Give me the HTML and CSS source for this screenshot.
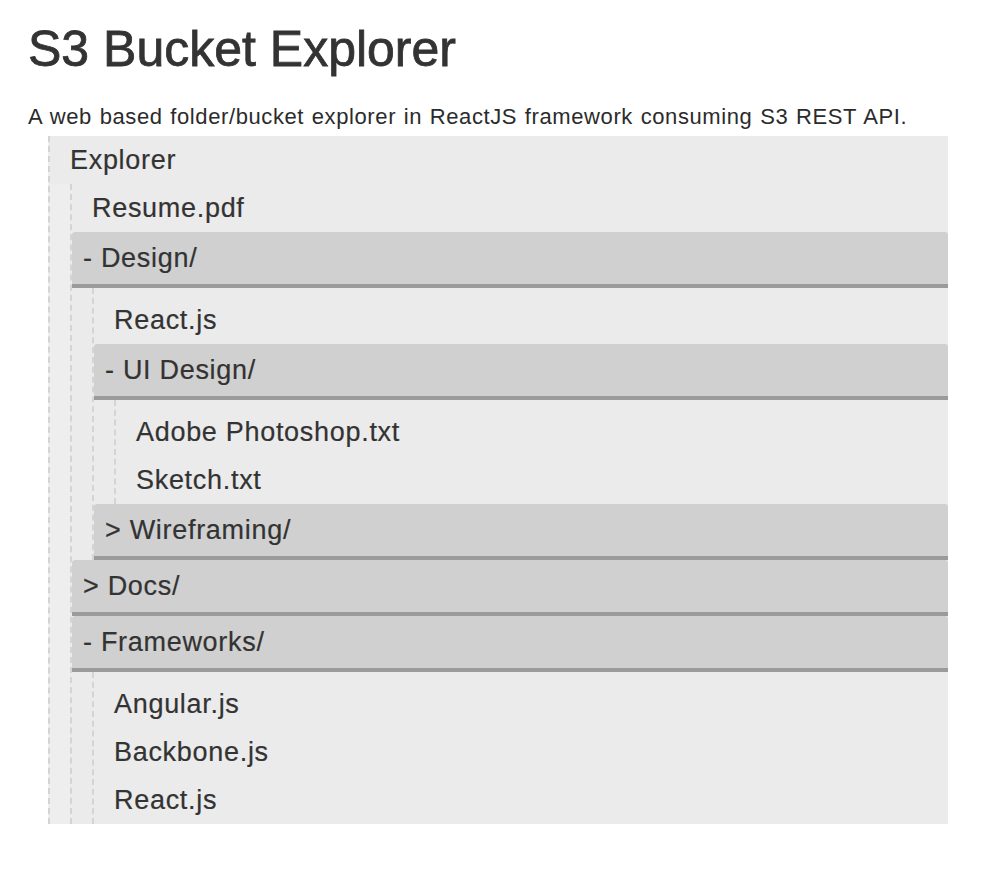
FILE: index.html
```html
<!DOCTYPE html>
<html lang="en">
<head>
<meta charset="utf-8">
<title>S3 Bucket Explorer</title>
<link rel="stylesheet" href="styles.css">
</head>
<body>
<div class="page">
  <h1 class="title">S3 Bucket Explorer</h1>
  <p class="lead">A web based folder/bucket explorer in ReactJS framework consuming S3 REST API.</p>
  <div class="explorer">
    <div class="root">Explorer</div>
    <ul class="tree level1">
      <li class="file">Resume.pdf</li>
      <li class="folder">
        <div class="folder-head">- Design/</div>
        <ul class="tree">
          <li class="file">React.js</li>
          <li class="folder">
            <div class="folder-head">- UI Design/</div>
            <ul class="tree">
              <li class="file">Adobe Photoshop.txt</li>
              <li class="file">Sketch.txt</li>
            </ul>
          </li>
          <li class="folder">
            <div class="folder-head">&gt; Wireframing/</div>
          </li>
        </ul>
      </li>
      <li class="folder">
        <div class="folder-head">&gt; Docs/</div>
      </li>
      <li class="folder">
        <div class="folder-head">- Frameworks/</div>
        <ul class="tree">
          <li class="file">Angular.js</li>
          <li class="file">Backbone.js</li>
          <li class="file">React.js</li>
        </ul>
      </li>
    </ul>
  </div>
</div>
</body>
</html>
```
FILE: styles.css
```css
html, body {
  margin: 0;
  padding: 0;
  background: #ffffff;
}

body {
  font-family: "Liberation Sans", Arial, sans-serif;
  color: #333333;
}

.page {
  padding: 22px 28px 40px;
}

.title {
  margin: 0;
  font-size: 50px;
  line-height: 55px;
  font-weight: normal;
  color: #333333;
  -webkit-text-stroke: 0.8px #333333;
}

.lead {
  margin: 28px 0 0;
  font-size: 22px;
  line-height: 24px;
  letter-spacing: 0.6px;
  word-spacing: 1px;
  color: #2b2b2b;
  white-space: nowrap;
}

.explorer {
  margin: 7px 0 0 20px;
  width: 898px;
  background: #eeeeee;
  border-left: 2px dashed #d4d4d4;
}

.root {
  height: 48px;
  line-height: 48px;
  padding-left: 20px;
  background: #ebebeb;
  font-size: 27px;
  letter-spacing: 0.7px;
  -webkit-text-stroke: 0.2px #333333;
}

.tree {
  list-style: none;
  margin: 0 0 0 20px;
  padding: 0;
  background: #ebebeb;
  border-left: 2px dashed #d4d4d4;
}

.tree .tree {
  padding-top: 8px;
}

.file {
  height: 48px;
  line-height: 48px;
  padding-left: 20px;
  font-size: 27px;
  letter-spacing: 0.7px;
  -webkit-text-stroke: 0.2px #333333;
}

.folder-head {
  height: 52px;
  line-height: 52px;
  padding-left: 11px;
  background: #d0d0d0;
  border-bottom: 4px solid #9b9b9b;
  border-radius: 3px 3px 0 0;
  font-size: 27px;
  letter-spacing: 0.7px;
  -webkit-text-stroke: 0.2px #333333;
}
```
